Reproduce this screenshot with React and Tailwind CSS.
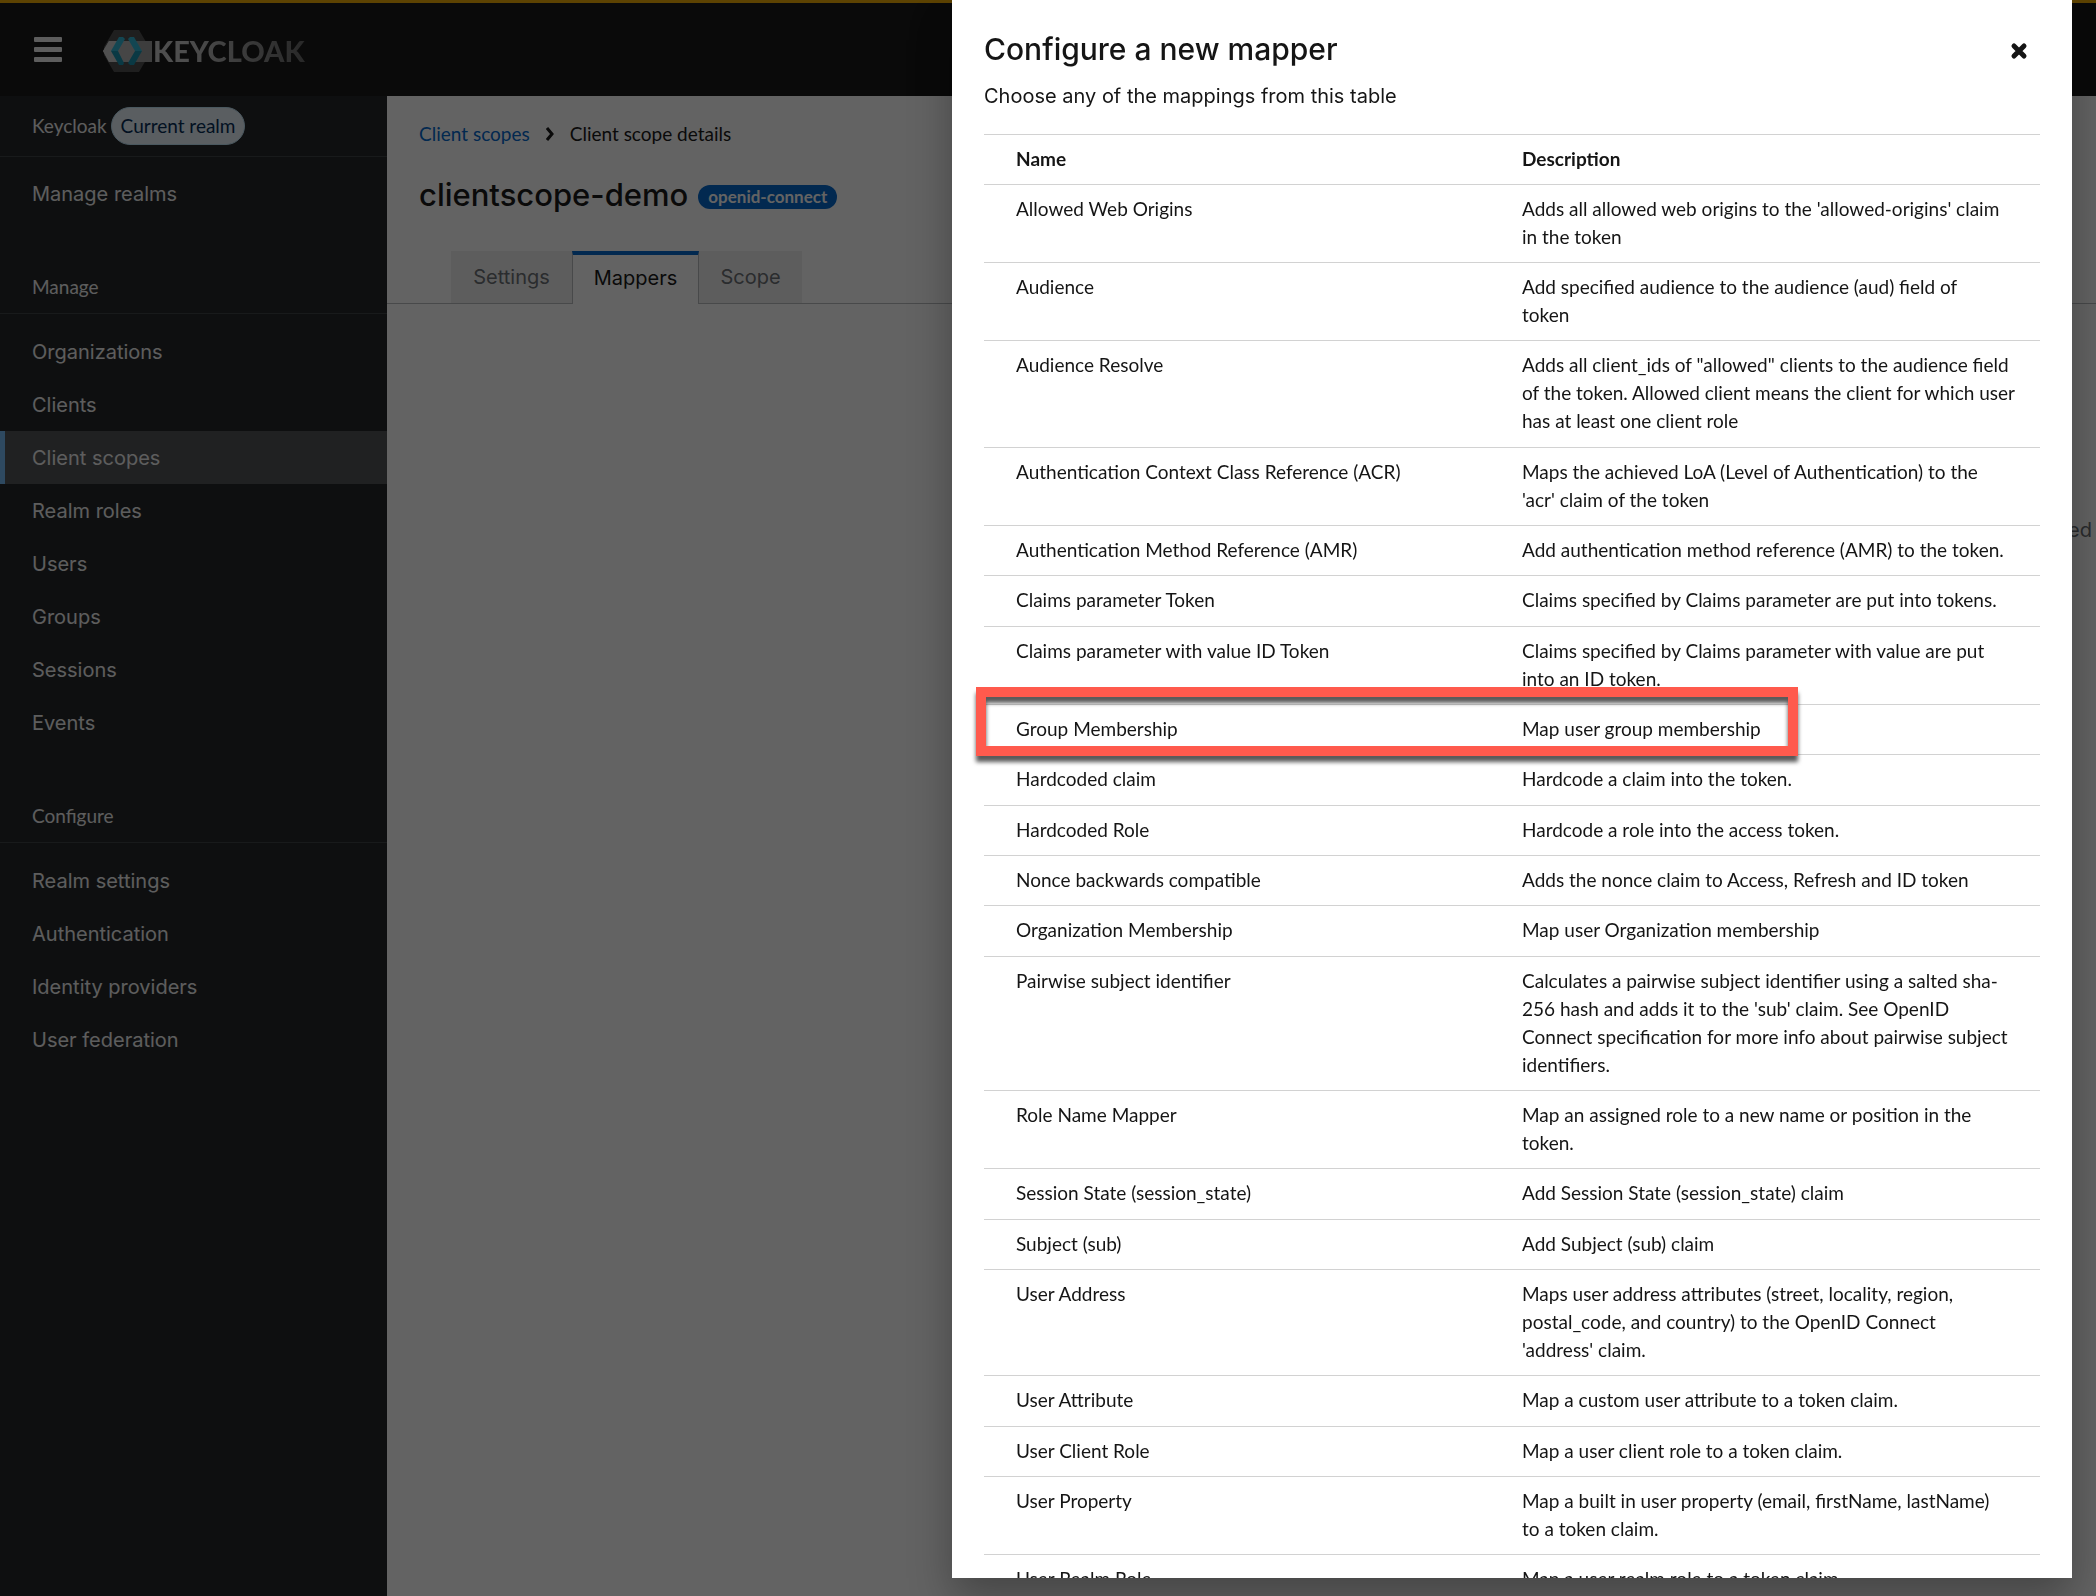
import React from 'react';

const manageLinks = ['Organizations', 'Clients', 'Client scopes', 'Realm roles', 'Users', 'Groups', 'Sessions', 'Events'];

const configureLinks = ['Realm settings', 'Authentication', 'Identity providers', 'User federation'];

const mappers = [
  { name: 'Allowed Web Origins', description: "Adds all allowed web origins to the 'allowed-origins' claim in the token" },
  { name: 'Audience', description: 'Add specified audience to the audience (aud) field of\ntoken' },
  { name: 'Audience Resolve', description: 'Adds all client_ids of "allowed" clients to the audience field of the token. Allowed client means the client for which user has at least one client role' },
  { name: 'Authentication Context Class Reference (ACR)', description: "Maps the achieved LoA (Level of Authentication) to the\n'acr' claim of the token" },
  { name: 'Authentication Method Reference (AMR)', description: 'Add authentication method reference (AMR) to the token.' },
  { name: 'Claims parameter Token', description: 'Claims specified by Claims parameter are put into tokens.' },
  { name: 'Claims parameter with value ID Token', description: 'Claims specified by Claims parameter with value are put into an ID token.' },
  { name: 'Group Membership', description: 'Map user group membership', highlighted: true },
  { name: 'Hardcoded claim', description: 'Hardcode a claim into the token.' },
  { name: 'Hardcoded Role', description: 'Hardcode a role into the access token.' },
  { name: 'Nonce backwards compatible', description: 'Adds the nonce claim to Access, Refresh and ID token' },
  { name: 'Organization Membership', description: 'Map user Organization membership' },
  { name: 'Pairwise subject identifier', description: "Calculates a pairwise subject identifier using a salted sha-256 hash and adds it to the 'sub' claim. See OpenID Connect specification for more info about pairwise subject identifiers." },
  { name: 'Role Name Mapper', description: 'Map an assigned role to a new name or position in the token.' },
  { name: 'Session State (session_state)', description: 'Add Session State (session_state) claim' },
  { name: 'Subject (sub)', description: 'Add Subject (sub) claim' },
  { name: 'User Address', description: "Maps user address attributes (street, locality, region, postal_code, and country) to the OpenID Connect\n'address' claim." },
  { name: 'User Attribute', description: 'Map a custom user attribute to a token claim.' },
  { name: 'User Client Role', description: 'Map a user client role to a token claim.' },
  { name: 'User Property', description: 'Map a built in user property (email, firstName, lastName)\nto a token claim.' },
  { name: 'User Realm Role', description: 'Map a user realm role to a token claim.' },
];

function Logo() {
  return (
    <a href="#home" aria-label="Keycloak" className="flex items-center">
      <svg viewBox="0 0 50 42" className="w-[50px] h-[42px]" aria-hidden="true">
        <path d="M11 0h25l10 17v8L36 42H11L1 25v-8z" fill="#4d4d4d" />
        <path d="M6 11h43v21H6L0 21z" fill="#b4b4b4" />
        <path d="M6 11h14l-7 10 7 11H6L0 21z" fill="#cccccc" />
        <path d="M30 11h19v21H30l8-11z" fill="#9c9c9c" />
        <path d="M16 7h4l2 2-7 12H8z" fill="#2fb4d2" />
        <path d="M8 21h7l6 12-1 2h-4z" fill="#1590ad" />
        <path d="M31 7h-4l-2 2 7 12h7z" fill="#2fb4d2" />
        <path d="M39 21h-7l-7 12 2 2h4z" fill="#1590ad" />
      </svg>
      <span className="bg-linear-to-r from-[#c8c8c8] from-20% to-[#666666] bg-clip-text font-['Lato',sans-serif] text-[29px] leading-none font-black text-transparent">
        KEYCLOAK
      </span>
    </a>
  );
}

function NavSection({ title, links }) {
  return (
    <section className="mt-[41px]">
      <h2 className="h-[53px] px-8 flex items-center border-b border-[#3c3f42] font-['Lato',sans-serif] text-[19px]">{title}</h2>
      <ul className="pt-[11px]">
        {links.map((link) => (
          <li key={link}>
            <a
              href="#nav"
              className={
                link === 'Client scopes'
                  ? 'h-[53px] pl-[27px] flex items-center border-l-[5px] border-[#73bcf7] bg-[#4f5255]'
                  : 'h-[53px] px-8 flex items-center'
              }
            >
              {link}
            </a>
          </li>
        ))}
      </ul>
    </section>
  );
}

function Sidebar() {
  return (
    <nav className="w-[387px] shrink-0 bg-[#212427] text-[20px] text-[#f0f0f0]">
      <div className="h-[61px] px-8 flex items-center gap-1 border-b border-[#3c3f42] font-['Lato',sans-serif] text-[19px]">
        Keycloak
        <span className="h-[38px] px-[9px] flex items-center rounded-full border border-[#bee1f4] bg-[#e7f1fa] text-[#002952]">Current realm</span>
      </div>
      <a href="#realms" className="h-[53px] mt-[10px] px-8 flex items-center">Manage realms</a>
      <NavSection title="Manage" links={manageLinks} />
      <NavSection title="Configure" links={configureLinks} />
    </nav>
  );
}

function Content() {
  return (
    <main className="flex-1 bg-white text-[#151515]">
      <nav className="h-7 mt-6 px-8 flex items-center font-['Lato',sans-serif] text-[19px]">
        <a href="#scopes" className="text-[#0066cc]">Client scopes</a>
        <svg viewBox="0 0 8 14" className="w-2 h-[14px] mx-4" fill="none" stroke="currentColor" strokeWidth="3" aria-hidden="true">
          <path d="M1 1l5 6-5 6" />
        </svg>
        <span>Client scope details</span>
      </nav>
      <div className="h-[46px] mt-6 px-8 flex items-center gap-[10px]">
        <h1 className="text-[31px] font-medium">clientscope-demo</h1>
        <span className="h-6 mt-1 px-[10px] flex items-center rounded-full bg-[#0066cc] font-['Lato',sans-serif] text-[17px] font-bold text-white">openid-connect</span>
      </div>
      <div role="tablist" className="mt-[33px] pl-16 flex border-b border-[#b8bbbe] text-[20px] text-[#6a6e73]">
        <button role="tab" className="h-[52px] w-[121px] bg-[#f0f0f0]">Settings</button>
        <button role="tab" aria-selected="true" className="h-[53px] w-[127px] -mb-px pb-1 border-x border-t-4 border-x-[#b8bbbe] border-t-[#0066cc] bg-white text-[#151515]">Mappers</button>
        <button role="tab" className="h-[52px] w-[103px] bg-[#f0f0f0]">Scope</button>
      </div>
      <p className="mt-[211px] pr-1 text-right text-[20px] text-[#6a6e73]">ed</p>
    </main>
  );
}

function MapperRow({ name, description, highlighted }) {
  return (
    <tr className="relative border-b border-[#d2d2d2] align-top *:pt-[10px] *:pb-[11px] nth-[3n]:*:pb-3">
      <td className="w-1/2 pl-8">
        {name}
        {highlighted && (
          <span className="absolute -top-[18px] -bottom-[2px] -left-2 right-[242px] border-[10px] border-[#ff5a4d] drop-shadow-[0_6px_2px_rgba(0,0,0,0.65)]"></span>
        )}
      </td>
      <td className="pl-[10px] pr-6 whitespace-pre-line">{description}</td>
    </tr>
  );
}

function MapperDialog() {
  return (
    <div role="dialog" aria-labelledby="mapper-title" className="fixed top-0 right-6 bottom-[18px] w-[1120px] overflow-hidden bg-white px-8 text-[#151515] shadow-[0_20px_40px_0_rgba(3,3,3,0.3)]">
      <header className="pt-7 flex items-start justify-between">
        <h2 id="mapper-title" className="text-[30px] leading-[42px] font-medium">Configure a new mapper</h2>
        <button aria-label="Close" className="mt-3 mr-[10px] p-[2px]">
          <svg viewBox="0 0 18 18" className="w-[18px] h-[18px]" stroke="currentColor" strokeWidth="5" strokeLinecap="round" aria-hidden="true">
            <path d="M4 4l10 10M14 4L4 14" />
          </svg>
        </button>
      </header>
      <p className="mt-[10px] text-[20px] leading-8">Choose any of the mappings from this table</p>
      <table className="mt-[22px] w-full table-fixed border-collapse border-t border-[#d2d2d2] font-['Lato',sans-serif] text-[19px] leading-7">
        <thead>
          <tr className="border-b border-[#d2d2d2] text-left">
            <th className="w-1/2 pt-[10px] pb-[11px] pl-8">Name</th>
            <th className="pt-[10px] pb-[11px] pl-[10px] pr-6">Description</th>
          </tr>
        </thead>
        <tbody>
          {mappers.map((mapper) => (
            <MapperRow key={mapper.name} {...mapper} />
          ))}
        </tbody>
      </table>
    </div>
  );
}

export default function App() {
  return (
    <div className="h-screen overflow-hidden flex flex-col font-['Inter',sans-serif]">
      <header className="h-24 shrink-0 px-8 pt-[2px] flex items-center border-t-[3px] border-[#f0ab00] bg-[#151515]">
        <button aria-label="Global navigation" className="w-8 mr-[39px] text-[#f0f0f0]">
          <svg viewBox="0 0 32 28" className="w-8 h-7" fill="currentColor" aria-hidden="true">
            <rect x="2" y="0" width="28" height="5" rx="1" />
            <rect x="2" y="10" width="28" height="5" rx="1" />
            <rect x="2" y="20" width="28" height="5" rx="1" />
          </svg>
        </button>
        <Logo />
      </header>
      <div className="flex-1 flex">
        <Sidebar />
        <Content />
      </div>
      <div className="fixed inset-0 bg-[#030303]/62"></div>
      <MapperDialog />
    </div>
  );
}
